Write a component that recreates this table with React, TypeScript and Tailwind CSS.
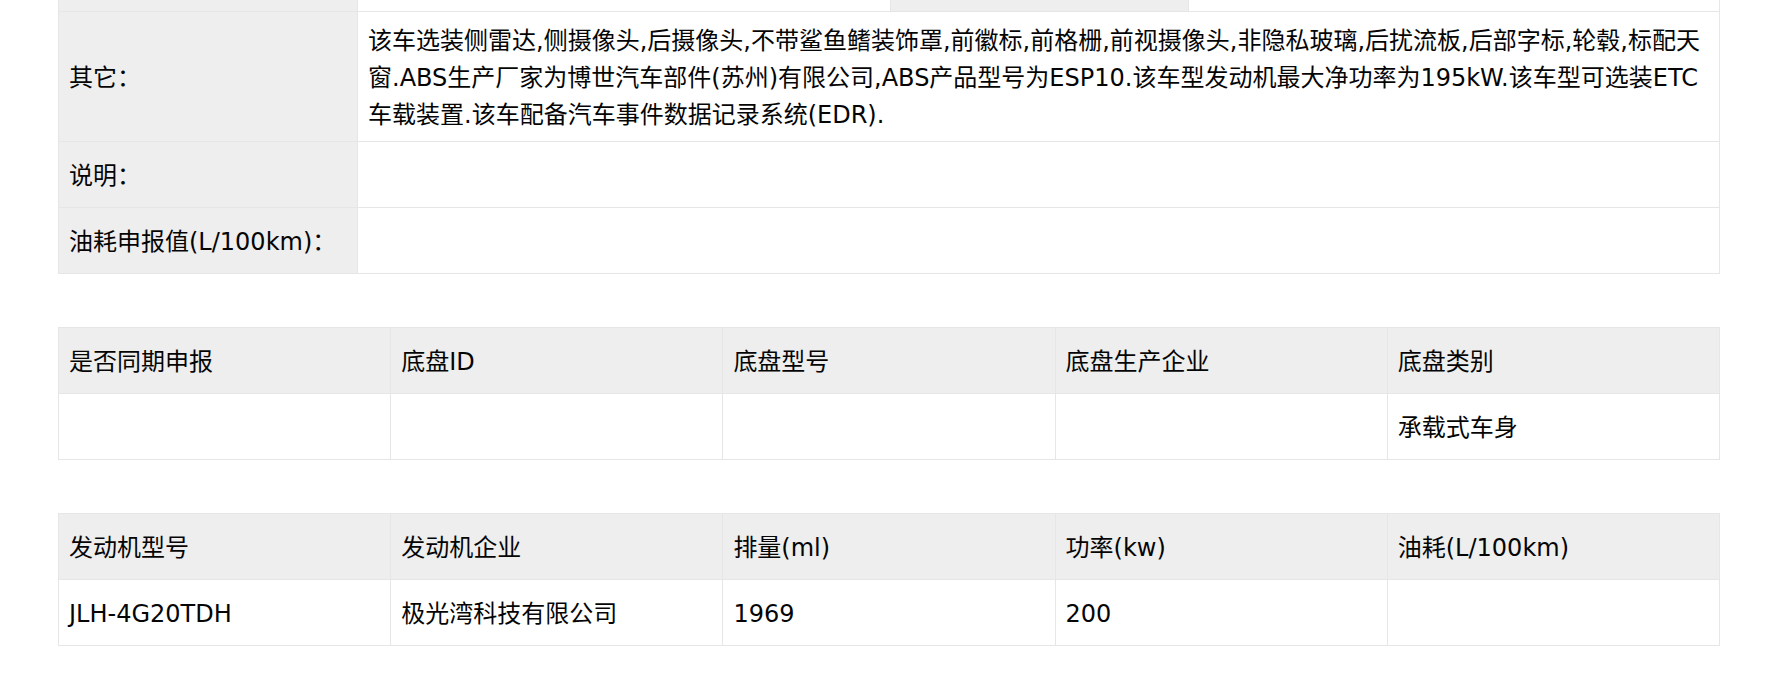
import React from 'react';

const cell = 'border border-[#e6e6e6] px-[10px] pt-[11px] pb-[7px] h-[66px] align-middle text-left font-normal';
const labelCell = `${cell} bg-[#eeeeee]`;

const otherText =
  '该车选装侧雷达,侧摄像头,后摄像头,不带鲨鱼鳍装饰罩,前徽标,前格栅,前视摄像头,非隐私玻璃,后扰流板,后部字标,轮毂,标配天窗.ABS生产厂家为博世汽车部件(苏州)有限公司,ABS产品型号为ESP10.该车型发动机最大净功率为195kW.该车型可选装ETC车载装置.该车配备汽车事件数据记录系统(EDR).';

const chassisHead = ['是否同期申报', '底盘ID', '底盘型号', '底盘生产企业', '底盘类别'];
const chassisRow = ['', '', '', '', '承载式车身'];

const engineHead = ['发动机型号', '发动机企业', '排量(ml)', '功率(kw)', '油耗(L/100km)'];
const engineRow = ['JLH-4G20TDH', '极光湾科技有限公司', '1969', '200', ''];

function FiveColTable({ head, row }: { head: string[]; row: string[] }) {
  return (
    <table className="w-full table-fixed border-collapse">
      <thead>
        <tr>
          {head.map((h, i) => (
            <th key={i} className={labelCell}>
              {h}
            </th>
          ))}
        </tr>
      </thead>
      <tbody>
        <tr>
          {row.map((v, i) => (
            <td key={i} className={cell}>
              {v}
            </td>
          ))}
        </tr>
      </tbody>
    </table>
  );
}

export default function App() {
  return (
    <div className="min-h-[680px] bg-white pl-[58px] pr-[46px] text-[24px] leading-[37px] text-[#050505] font-['DejaVu_Sans','Noto_Sans_CJK_SC',sans-serif]">
      {/* basic info table, scrolled so only the bottom of the previous row shows */}
      <table className="w-full table-fixed border-collapse">
        <colgroup>
          <col className="w-[299px]" />
          <col className="w-[533px]" />
          <col className="w-[298px]" />
          <col />
        </colgroup>
        <tbody>
          <tr>
            <td className="h-[11px] p-0 border border-t-0 border-[#e6e6e6] bg-[#eeeeee]" />
            <td className="h-[11px] p-0 border border-t-0 border-[#e6e6e6]" />
            <td className="h-[11px] p-0 border border-t-0 border-[#e6e6e6] bg-[#eeeeee]" />
            <td className="h-[11px] p-0 border border-t-0 border-[#e6e6e6]" />
          </tr>
          <tr>
            <td className={labelCell}>其它：</td>
            <td colSpan={3} className={`${cell} pt-[9px] pb-[7px]`}>
              {otherText}
            </td>
          </tr>
          <tr>
            <td className={labelCell}>说明：</td>
            <td colSpan={3} className={cell}></td>
          </tr>
          <tr>
            <td className={labelCell}>油耗申报值(L/100km)：</td>
            <td colSpan={3} className={cell}></td>
          </tr>
        </tbody>
      </table>

      <div className="mt-[53px]">
        <FiveColTable head={chassisHead} row={chassisRow} />
      </div>

      <div className="mt-[53px]">
        <FiveColTable head={engineHead} row={engineRow} />
      </div>
    </div>
  );
}
